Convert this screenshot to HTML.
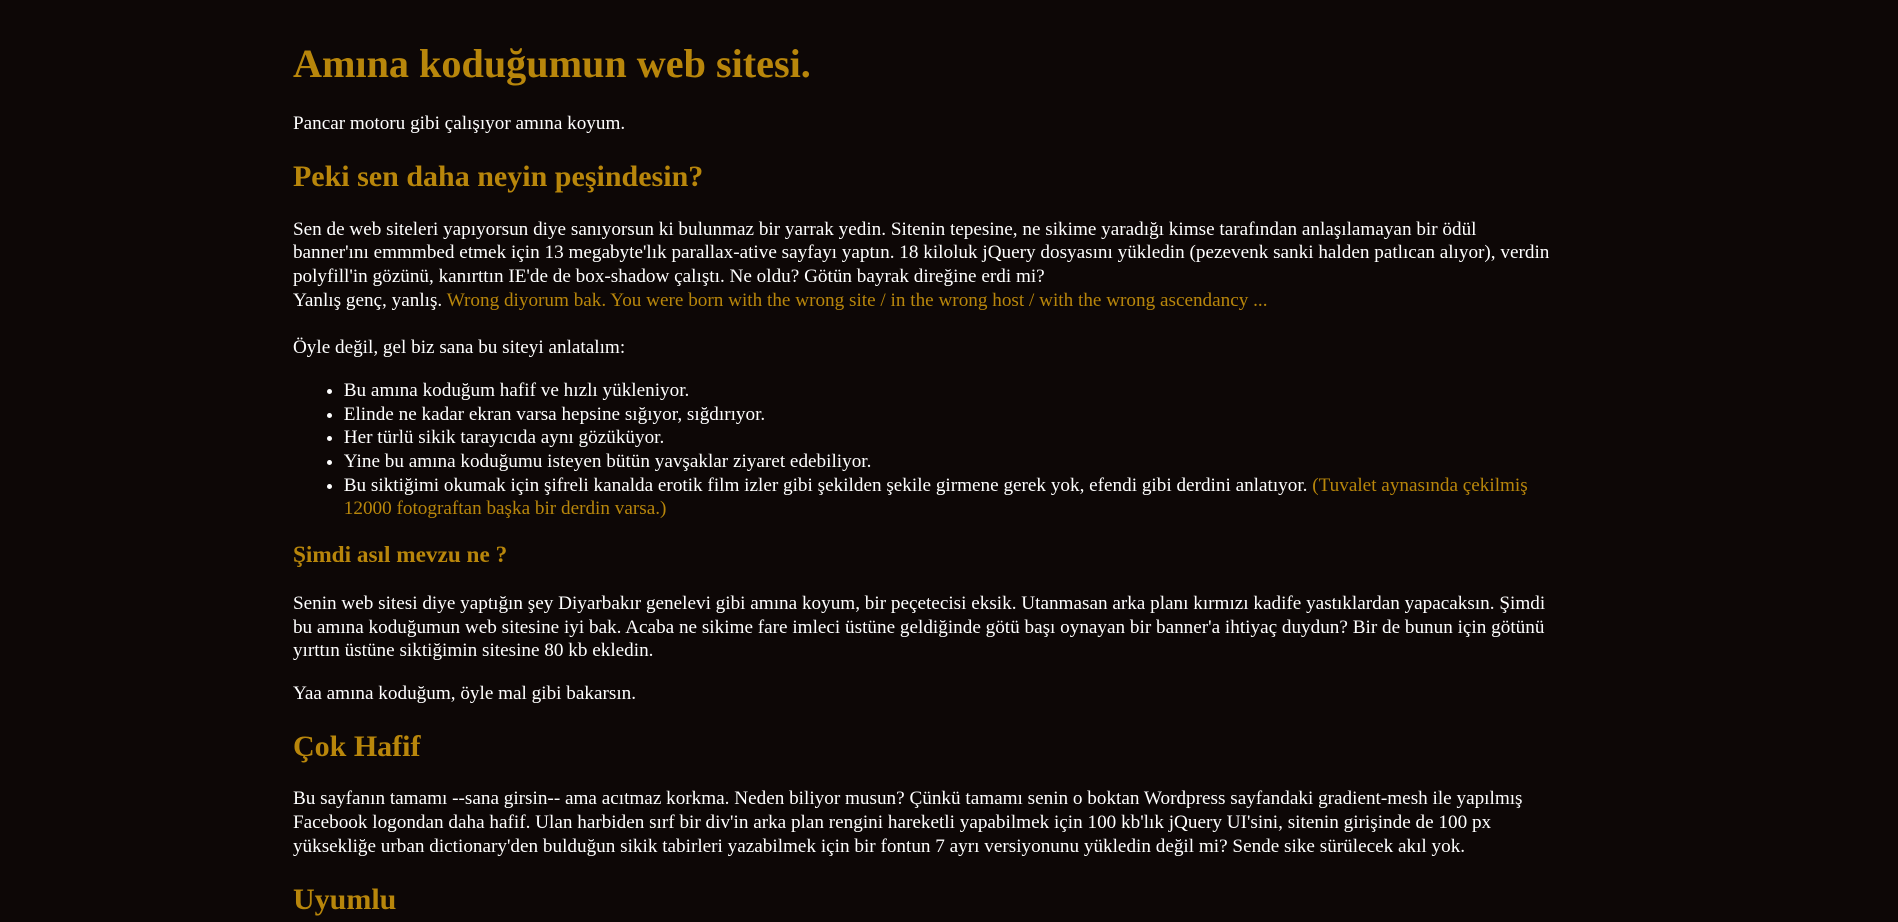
<!DOCTYPE html>
<html><head><meta charset="utf-8"><style>
html{background:#0d0706;height:922px;overflow:hidden}
body{margin:0;height:922px;overflow:hidden;background:#0d0706}
.w{zoom:1.2105;padding:35px 0 0 242px;width:1095px;color:#fff;font-family:"Liberation Serif",serif;font-size:15.85px;line-height:1.234}
h1,h2,h3{color:#b8860b}
h1{font-size:33.2px;line-height:36.6px;margin:0 0 21.3px}
h2{font-size:24.8px;line-height:27.4px;margin:20px 0}
h3{font-size:19.2px;line-height:21.4px;margin:18.6px 0}
p{margin:15.9px 0}
ul{margin:15.9px 0;padding-left:42px;padding-right:40px}
.g{color:#b8860b}
</style></head><body><div class="w">
<h1>Amına koduğumun web sitesi.</h1>
<p>Pancar motoru gibi çalışıyor amına koyum.</p>
<h2>Peki sen daha neyin peşindesin?</h2>
<p>Sen de web siteleri yapıyorsun diye sanıyorsun ki bulunmaz bir yarrak yedin. Sitenin tepesine, ne sikime yaradığı kimse tarafından anlaşılamayan bir ödül<br>banner'ını emmmbed etmek için 13 megabyte'lık parallax-ative sayfayı yaptın. 18 kiloluk jQuery dosyasını yükledin (pezevenk sanki halden patlıcan alıyor), verdin polyfill'in gözünü, kanırttın IE'de de box-shadow çalıştı. Ne oldu? Götün bayrak direğine erdi mi?<br>Yanlış genç, yanlış. <span class="g">Wrong diyorum bak. You were born with the wrong site / in the wrong host / with the wrong ascendancy ...</span><br><br>Öyle değil, gel biz sana bu siteyi anlatalım:</p>
<ul>
<li>Bu amına koduğum hafif ve hızlı yükleniyor.</li>
<li>Elinde ne kadar ekran varsa hepsine sığıyor, sığdırıyor.</li>
<li>Her türlü sikik tarayıcıda aynı gözüküyor.</li>
<li>Yine bu amına koduğumu isteyen bütün yavşaklar ziyaret edebiliyor.</li>
<li>Bu siktiğimi okumak için şifreli kanalda erotik film izler gibi şekilden şekile girmene gerek yok, efendi gibi derdini anlatıyor. <span class="g">(Tuvalet aynasında çekilmiş<br>12000 fotograftan başka bir derdin varsa.)</span></li>
</ul>
<h3>Şimdi asıl mevzu ne ?</h3>
<p>Senin web sitesi diye yaptığın şey Diyarbakır genelevi gibi amına koyum, bir peçetecisi eksik. Utanmasan arka planı kırmızı kadife yastıklardan yapacaksın. Şimdi<br>bu amına koduğumun web sitesine iyi bak. Acaba ne sikime fare imleci üstüne geldiğinde götü başı oynayan bir banner'a ihtiyaç duydun? Bir de bunun için götünü<br>yırttın üstüne siktiğimin sitesine 80 kb ekledin.</p>
<p>Yaa amına koduğum, öyle mal gibi bakarsın.</p>
<h2>Çok Hafif</h2>
<p>Bu sayfanın tamamı --sana girsin-- ama acıtmaz korkma. Neden biliyor musun? Çünkü tamamı senin o boktan Wordpress sayfandaki gradient-mesh ile yapılmış<br>Facebook logondan daha hafif. Ulan harbiden sırf bir div'in arka plan rengini hareketli yapabilmek için 100 kb'lık jQuery UI'sini, sitenin girişinde de 100 px<br>yüksekliğe urban dictionary'den bulduğun sikik tabirleri yazabilmek için bir fontun 7 ayrı versiyonunu yükledin değil mi? Sende sike sürülecek akıl yok.</p>
<h2>Uyumlu</h2>
<p>&nbsp;</p>
</div></body></html>
